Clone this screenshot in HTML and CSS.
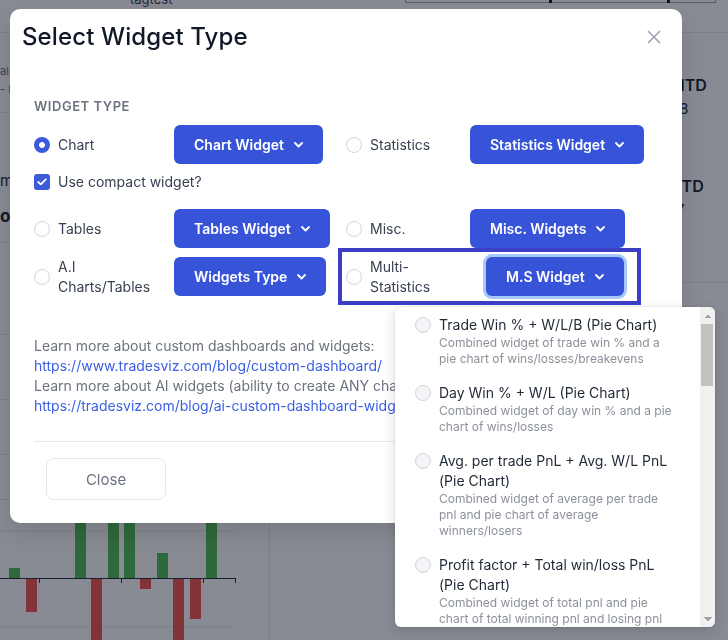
FILE: index.html
```html
<!DOCTYPE html>
<html>
<head>
<meta charset="utf-8">
<title>Select Widget Type</title>
<link rel="stylesheet" href="styles.css">
</head>
<body>
<div class="page">
  <div class="topbar">
    <span class="tag">tagtest</span>
    <div class="topbox"><i class="mark m1"></i><i class="mark m2"></i></div>
  </div>
  <div class="cols">
    <div class="leftcol">
      <div class="lblock">
        <div class="ltxt">al I</div>
        <div class="ltxt">- IT</div>
      </div>
      <div class="lblock2">
        <div class="lmid">m</div>
        <div class="lbold">ol</div>
      </div>
      <div class="lrow h92"></div>
      <div class="lrow h65"></div>
      <div class="lrow h55"></div>
      <div class="lrow h45"></div>
      <svg class="chart" width="269" height="140" viewBox="0 0 269 140">
        <line x1="0" y1="31" x2="236" y2="31" stroke="#e5e7eb"/>
        <line x1="0" y1="127" x2="236" y2="127" stroke="#e5e7eb"/>
        <rect x="9" y="68" width="11" height="10" fill="#4bbb4e"/>
        <rect x="26" y="78" width="11" height="34" fill="#f44f49"/>
        <rect x="75" y="0" width="11" height="78" fill="#4bbb4e"/>
        <rect x="91" y="78" width="11" height="62" fill="#f44f49"/>
        <rect x="108" y="0" width="11" height="78" fill="#4bbb4e"/>
        <rect x="124" y="0" width="11" height="78" fill="#4bbb4e"/>
        <rect x="140" y="78" width="11" height="11" fill="#f44f49"/>
        <rect x="157" y="53" width="11" height="25" fill="#4bbb4e"/>
        <rect x="173" y="78" width="11" height="62" fill="#f44f49"/>
        <rect x="190" y="78" width="11" height="41" fill="#f44f49"/>
        <rect x="206" y="0" width="11" height="78" fill="#4bbb4e"/>
        <line x1="0" y1="78.5" x2="236" y2="78.5" stroke="#1f2937"/>
        <line x1="39.5" y1="78" x2="39.5" y2="83" stroke="#1f2937"/>
        <line x1="121.5" y1="78" x2="121.5" y2="83" stroke="#1f2937"/>
        <line x1="203.5" y1="78" x2="203.5" y2="83" stroke="#1f2937"/>
        <line x1="235.5" y1="78" x2="235.5" y2="83" stroke="#1f2937"/>
      </svg>
    </div>
    <div class="midcol"></div>
    <div class="rightcol">
      <div class="stat">
        <div class="stat-l">MTD</div>
        <div class="stat-v">38</div>
      </div>
      <div class="stat">
        <div class="stat-l">YTD</div>
        <div class="stat-v">17</div>
      </div>
    </div>
  </div>
</div>

<div class="backdrop"></div>

<div class="modal">
  <div class="mhead">
    <h1 class="mtitle">Select Widget Type</h1>
    <svg class="xbtn" width="14" height="14" viewBox="0 0 14 14"><path d="M1 1 L13 13 M13 1 L1 13" stroke="#9ca3af" stroke-width="1.6" fill="none"/></svg>
  </div>
  <div class="mbody">
    <div class="slabel">WIDGET TYPE</div>

    <div class="row r1">
      <label class="opt c1"><span class="radio on"></span><span class="otext">Chart</span></label>
      <div class="bcell"><span class="btn">Chart Widget<svg class="chev" width="9" height="6" viewBox="0 0 9 6"><path d="M1 1 L4.5 4.5 L8 1" stroke="#fff" stroke-width="1.8" fill="none" stroke-linecap="round" stroke-linejoin="round"/></svg></span></div>
      <label class="opt c2"><span class="radio"></span><span class="otext">Statistics</span></label>
      <span class="btn">Statistics Widget<svg class="chev" width="9" height="6" viewBox="0 0 9 6"><path d="M1 1 L4.5 4.5 L8 1" stroke="#fff" stroke-width="1.8" fill="none" stroke-linecap="round" stroke-linejoin="round"/></svg></span>
    </div>

    <label class="compact"><span class="check"><svg width="10" height="8" viewBox="0 0 10 8"><path d="M1.2 4 L3.8 6.4 L8.8 1.4" stroke="#fff" stroke-width="1.8" fill="none" stroke-linecap="round" stroke-linejoin="round"/></svg></span><span class="otext">Use compact widget?</span></label>

    <div class="row r2">
      <label class="opt c1"><span class="radio"></span><span class="otext">Tables</span></label>
      <div class="bcell"><span class="btn">Tables Widget<svg class="chev" width="9" height="6" viewBox="0 0 9 6"><path d="M1 1 L4.5 4.5 L8 1" stroke="#fff" stroke-width="1.8" fill="none" stroke-linecap="round" stroke-linejoin="round"/></svg></span></div>
      <label class="opt c2"><span class="radio"></span><span class="otext">Misc.</span></label>
      <span class="btn">Misc. Widgets<svg class="chev" width="9" height="6" viewBox="0 0 9 6"><path d="M1 1 L4.5 4.5 L8 1" stroke="#fff" stroke-width="1.8" fill="none" stroke-linecap="round" stroke-linejoin="round"/></svg></span>
    </div>

    <div class="row r3">
      <label class="opt c1"><span class="radio"></span><span class="otext narrow">A.I Charts/Tables</span></label>
      <div class="bcell"><span class="btn">Widgets Type<svg class="chev" width="9" height="6" viewBox="0 0 9 6"><path d="M1 1 L4.5 4.5 L8 1" stroke="#fff" stroke-width="1.8" fill="none" stroke-linecap="round" stroke-linejoin="round"/></svg></span></div>
      <div class="ms-wrap">
        <label class="opt c2"><span class="radio"></span><span class="otext narrow">Multi-Statistics</span></label>
        <span class="btn focus">M.S Widget<svg class="chev" width="9" height="6" viewBox="0 0 9 6"><path d="M1 1 L4.5 4.5 L8 1" stroke="#fff" stroke-width="1.8" fill="none" stroke-linecap="round" stroke-linejoin="round"/></svg></span>
      </div>
    </div>

    <div class="learn">
      <div>Learn more about custom dashboards and widgets:</div>
      <a class="link">https://www.tradesviz.com/blog/custom-dashboard/</a>
      <div>Learn more about AI widgets (ability to create ANY chart/table using AI):</div>
      <a class="link">https://tradesviz.com/blog/ai-custom-dashboard-widgets/</a>
    </div>
    <div class="divider"></div>
    <div class="mfoot"><span class="closebtn">Close</span></div>
  </div>

  <div class="dropdown">
    <div class="dd-list">
      <div class="dd-item"><span class="dd-radio"></span><div class="dd-text"><div class="dd-title">Trade Win % + W/L/B (Pie Chart)</div><div class="dd-desc">Combined widget of trade win % and a pie chart of wins/losses/breakevens</div></div></div>
      <div class="dd-item"><span class="dd-radio"></span><div class="dd-text"><div class="dd-title">Day Win % + W/L (Pie Chart)</div><div class="dd-desc">Combined widget of day win % and a pie chart of wins/losses</div></div></div>
      <div class="dd-item"><span class="dd-radio"></span><div class="dd-text"><div class="dd-title">Avg. per trade PnL + Avg. W/L PnL (Pie Chart)</div><div class="dd-desc">Combined widget of average per trade pnl and pie chart of average winners/losers</div></div></div>
      <div class="dd-item"><span class="dd-radio"></span><div class="dd-text"><div class="dd-title">Profit factor + Total win/loss PnL (Pie Chart)</div><div class="dd-desc">Combined widget of total pnl and pie chart of total winning pnl and losing pnl</div></div></div>
      <div class="dd-item"><span class="dd-radio"></span><div class="dd-text"><div class="dd-title">Week Win % + W/L (Pie Chart)</div><div class="dd-desc">Combined widget of week win % and a pie chart of winning/losing weeks</div></div></div>
    </div>
    <div class="dd-scroll">
      <span class="sb-btn sb-up"></span>
      <div class="sb-track"><span class="sb-thumb"></span></div>
      <span class="sb-btn sb-down"></span>
    </div>
  </div>
</div>
</body>
</html>
```
FILE: styles.css
```css
* { box-sizing: border-box; }
html, body { margin: 0; padding: 0; }
body {
  width: 728px;
  height: 640px;
  overflow: hidden;
  background: #fff;
  font-family: Inter, "Noto Sans", "Liberation Sans", sans-serif;
  color: #1f2937;
  position: relative;
}

/* ---------- background page ---------- */
.page { width: 728px; height: 640px; }
.topbar {
  height: 33px;
  display: grid;
  grid-template-columns: 405px 311px;
  border-bottom: 1px solid #e5e7eb;
}
.tag {
  margin-top: -9px;
  margin-left: 130px;
  font-size: 13px;
  line-height: 16px;
  color: #374151;
}
.topbox {
  height: 3px;
  border: 1px solid #9ca3af;
  border-top: none;
  position: relative;
}
.mark { position: absolute; bottom: -1px; width: 3px; height: 3px; background: #111; }
.m1 { left: 143px; }
.m2 { left: 261px; }

.cols { display: grid; grid-template-columns: 270px 400px 58px; height: 607px; }
.leftcol { border-right: 1px solid #e5e7eb; display: flex; flex-direction: column; }
.lblock { height: 80px; padding-top: 29px; border-bottom: 1px solid #e5e7eb; }
.ltxt { font-size: 11px; line-height: 18px; color: #6b7280; }
.lblock2 { height: 130px; padding-top: 58px; border-bottom: 1px solid #e5e7eb; }
.lmid { font-size: 15px; line-height: 20px; color: #111827; }
.lbold { margin-top: 14px; font-size: 17px; line-height: 22px; font-weight: 700; color: #111827; }
.lrow { border-bottom: 1px solid #e5e7eb; }
.h92 { height: 92px; }
.h65 { height: 65px; }
.h55 { height: 55px; }
.h45 { height: 45px; }
.chart { display: block; }
.rightcol { padding-top: 33px; }
.stat { height: 101px; padding-top: 9px; }
.stat:last-child { border-bottom: 1px solid #e5e7eb; height: 116px; }
.stat-l { font-size: 16px; line-height: 20px; font-weight: 600; color: #111827; }
.stat-v { margin-top: 4px; font-size: 15px; line-height: 20px; color: #111827; }

.backdrop {
  position: fixed;
  inset: 0;
  background: rgba(17, 24, 39, 0.5);
}

/* ---------- modal ---------- */
.modal {
  position: absolute;
  left: 10px;
  top: 9px;
  width: 672px;
  height: 514px;
  background: #fff;
  border-radius: 10px;
  box-shadow: 0 10px 25px rgba(0, 0, 0, 0.12);
}
.mhead {
  display: flex;
  justify-content: space-between;
  align-items: center;
  padding: 12px 21px 0 12px;
}
.mtitle {
  margin: 0;
  font-size: 24px;
  line-height: 32px;
  font-weight: 500;
  color: #111827;
  letter-spacing: 0.12px;
}
.xbtn { display: block; }

.mbody { padding: 0 24px; }
.slabel {
  margin-top: 44px;
  font-size: 13px;
  line-height: 18px;
  font-weight: 600;
  color: #6b7280;
  letter-spacing: 0.55px;
}

.row { display: flex; align-items: center; height: 39px; }
.r1 { margin-top: 10px; }
.r2 { margin-top: 18px; }
.r3 { margin-top: 9px; }
.opt { display: flex; align-items: center; gap: 8px; }
.c1 { width: 140px; }
.c2 { width: 124px; }
.bcell { width: 172px; }
.otext { font-size: 14px; line-height: 20px; color: #374151; }
.narrow { width: 96px; }

.radio {
  width: 16px;
  height: 16px;
  flex-shrink: 0;
  border-radius: 50%;
  border: 1px solid #d1d5db;
  background: #fff;
}
.radio.on {
  border: none;
  background: radial-gradient(circle, #fff 0 2.6px, #3b5bdb 3.2px);
}

.compact {
  display: flex;
  align-items: center;
  gap: 8px;
  margin-top: 9px;
  height: 18px;
}
.check {
  width: 16px;
  height: 16px;
  border-radius: 3px;
  background: #3b5bdb;
  display: flex;
  align-items: center;
  justify-content: center;
}
.check svg { display: block; }

.btn {
  display: inline-flex;
  align-items: center;
  height: 39px;
  padding: 0 20px;
  background: #3754d9;
  color: #fff;
  border-radius: 6px;
  font-size: 14px;
  font-weight: 600;
  white-space: nowrap;
}
.chev { margin-left: 10px; display: block; }
.btn.focus { margin-left: 16px; box-shadow: 0 0 0 3px #a6c8fb; }

.ms-wrap {
  display: flex;
  align-items: center;
  border: 4px solid #3c3fc6;
  padding: 5px 13px 4px 4px;
  margin: -9px 0 -8px -8px;
}

.learn {
  margin-top: 40px;
  font-size: 14px;
  line-height: 20px;
  color: #6b7280;
  white-space: nowrap;
}
.link { display: block; color: #3b5fe3; text-decoration: none; }
.divider { margin-top: 25px; border-top: 1px solid #e5e7eb; }
.mfoot { padding: 16px 0 0 12px; }
.closebtn {
  display: inline-flex;
  align-items: center;
  justify-content: center;
  width: 120px;
  height: 42px;
  border: 1px solid #e5e7eb;
  border-radius: 8px;
  font-size: 15px;
  color: #6b7280;
}

/* ---------- dropdown ---------- */
.dropdown {
  position: absolute;
  left: 385px;
  top: 298px;
  width: 320px;
  height: 320px;
  display: flex;
  overflow: hidden;
  background: #fff;
  border-radius: 6px;
  box-shadow: 0 4px 14px rgba(0, 0, 0, 0.14), 0 0 0 1px rgba(0, 0, 0, 0.04);
}
.dd-list { flex: 1; overflow: hidden; }
.dd-item { display: flex; gap: 8px; padding: 8px 0 8px 20px; }
.dd-radio {
  width: 16px;
  height: 16px;
  flex-shrink: 0;
  margin-top: 2px;
  border-radius: 50%;
  border: 1px solid #d1d5db;
  background: #f3f4f6;
}
.dd-text { width: 236px; }
.dd-title { font-size: 14px; line-height: 20px; color: #1f2937; }
.dd-desc { font-size: 12px; line-height: 16px; color: #8b909a; }

.dd-scroll {
  width: 15px;
  flex-shrink: 0;
  background: #f1f1f1;
  display: flex;
  flex-direction: column;
}
.sb-btn {
  height: 17px;
  flex-shrink: 0;
  background-repeat: no-repeat;
  background-position: center;
  background-size: 8px 4px;
}
.sb-up { background-image: conic-gradient(from 135deg at 50% 0, #a3a3a3 0 90deg, transparent 90deg); }
.sb-down { background-image: conic-gradient(from -45deg at 50% 100%, #a3a3a3 0 90deg, transparent 90deg); }
.sb-track { flex: 1; padding: 0 2px 0 1px; }
.sb-thumb { display: block; height: 62px; background: #c1c1c1; }
```
